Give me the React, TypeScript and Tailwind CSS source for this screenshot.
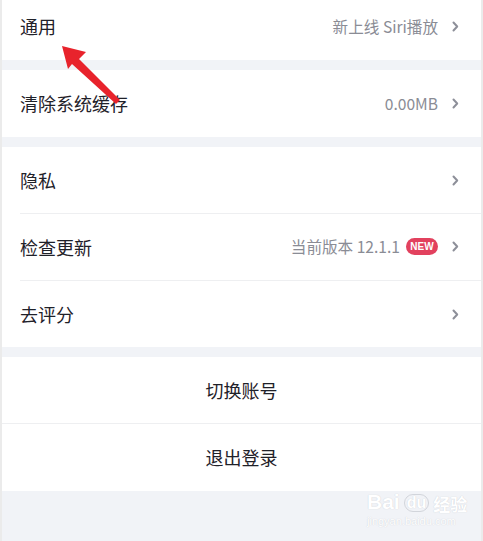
import type { ReactNode } from "react";

const font = { fontFamily: '"Noto Sans CJK SC", "Noto Sans", sans-serif' };

function Chevron() {
  return (
    <svg width="7" height="11" viewBox="0 0 7 11" className="shrink-0">
      <path d="M1.5 1.5 L5.2 5.5 L1.5 9.5" fill="none" stroke="#8d8f99" strokeWidth="2" strokeLinecap="round" strokeLinejoin="round" />
    </svg>
  );
}

type RowProps = {
  label: string;
  value?: ReactNode;
  height?: string;
};

function Row({ label, value, height = "h-[66px]" }: RowProps) {
  return (
    <div className={`flex ${height} items-center bg-white pl-[18px] pr-[22px]`}>
      <span className="text-[18px] text-[#1f2129]">{label}</span>
      <div className="ml-auto flex items-center gap-[14px]">
        {value}
        <Chevron />
      </div>
    </div>
  );
}

function Gap() {
  return <div className="h-[10px] bg-[#f1f3f7]" />;
}

function Line({ inset }: { inset?: boolean }) {
  return (
    <div className="bg-white">
      <div className={`h-px bg-[#eeeff1] ${inset ? "ml-[18px]" : ""}`} />
    </div>
  );
}

export default function App() {
  return (
    <div className="relative h-[541px] w-[483px] overflow-hidden border-x-2 border-[#ebebeb] bg-[#f1f3f7]" style={font}>
      <Row
        label="通用"
        height="h-[60px] pb-[7px]"
        value={<span className="text-[15.6px] text-[#8a8c95]">新上线 Siri播放</span>}
      />
      <Gap />
      <Row
        label="清除系统缓存"
        height="h-[67px]"
        value={<span className="text-[15.6px] text-[#8a8c95]">0.00MB</span>}
      />
      <Gap />
      <Row label="隐私" />
      <Line inset />
      <Row
        label="检查更新"
        value={
          <div className="flex items-center gap-[6px]">
            <span className="text-[15.6px] text-[#8a8c95]">当前版本 12.1.1</span>
            <span className="flex h-[17px] w-[32px] items-center justify-center rounded-full bg-[#e2415e] text-[10px] font-bold text-white" style={{ fontFamily: '"Liberation Sans", sans-serif' }}>
              NEW
            </span>
          </div>
        }
      />
      <Line inset />
      <Row label="去评分" />
      <Gap />
      <div className="flex h-[66px] items-center justify-center bg-white text-[18px] text-[#1f2129]">切换账号</div>
      <Line />
      <div className="flex h-[67px] items-center justify-center bg-white text-[18px] text-[#1f2129]">退出登录</div>

      <svg className="absolute -left-[2px] top-0" width="140" height="110" viewBox="0 0 140 110">
        <polygon points="62,46 86,52 79,59 120,100 116,104 72,64 68,69" fill="#e8232c" />
      </svg>

      <div className="pointer-events-none absolute left-[365px] top-[491px] flex flex-col items-start text-white" style={{ fontFamily: '"Liberation Sans", sans-serif', textShadow: "0 0 1px #c4c7ce" }}>
        <div className="flex items-end gap-1 text-[21px] font-bold leading-none">
          <span>Bai</span>
          <span className="rounded-full border border-[#d2d5db] px-[2px] text-[16px]">du</span>
          <span className="text-[17px]" style={font}>经验</span>
        </div>
        <span className="mt-[4px] text-[11px] leading-none">jingyan.baidu.com</span>
      </div>
    </div>
  );
}
